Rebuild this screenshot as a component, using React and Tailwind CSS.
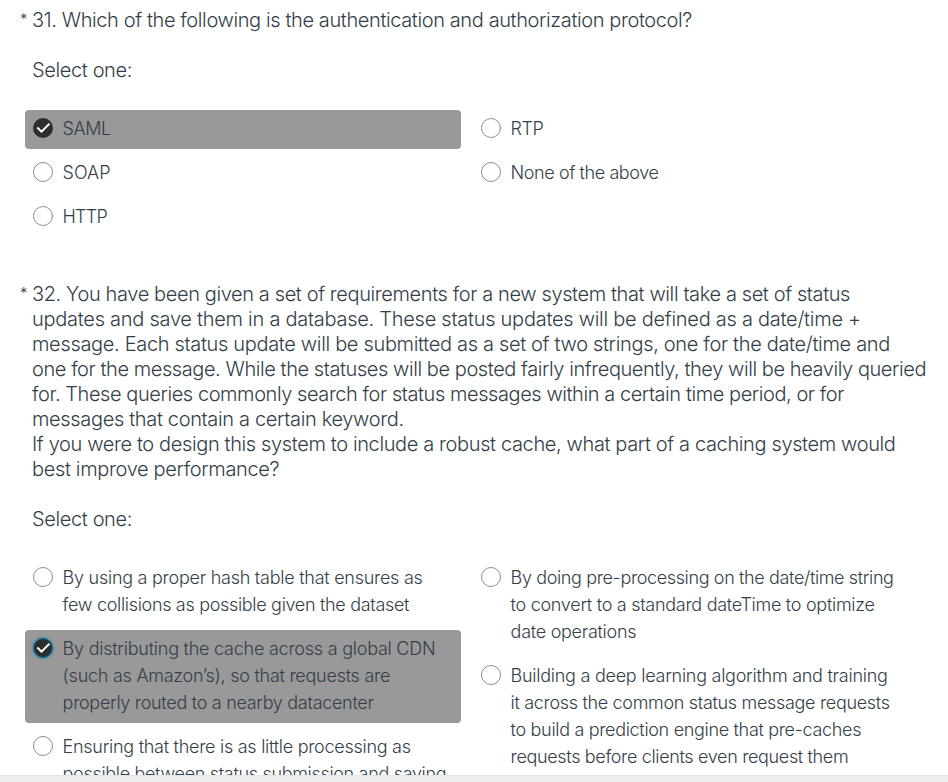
const QUESTION_31 = {
  title: [["31. Which of the following is the authentication and authorization protocol?", "tracking-[-0.388px]"]],
  left: [
    { selected: true, lines: [["SAML", "tracking-[-0.4px]"]] },
    { lines: [["SOAP", "tracking-[0px]"]] },
    { lines: [["HTTP", "tracking-[-0.8px]"]] },
  ],
  right: [
    { lines: [["RTP", "tracking-[-0.5px]"]] },
    { lines: [["None of the above", "tracking-[-0.42px]"]] },
  ],
};

const QUESTION_32 = {
  title: [
    ["32. You have been given a set of requirements for a new system that will take a set of status", "tracking-[-0.387px]"],
    ["updates and save them in a database. These status updates will be defined as a date/time +", "tracking-[-0.265px]"],
    ["message. Each status update will be submitted as a set of two strings, one for the date/time and", "tracking-[-0.327px]"],
    ["one for the message. While the statuses will be posted fairly infrequently, they will be heavily queried", "tracking-[-0.426px]"],
    ["for. These queries commonly search for status messages within a certain time period, or for", "tracking-[-0.431px]"],
    ["messages that contain a certain keyword.", "tracking-[-0.34px]"],
    ["If you were to design this system to include a robust cache, what part of a caching system would", "tracking-[-0.37px]"],
    ["best improve performance?", "tracking-[-0.34px]"],
  ],
  left: [
    {
      lines: [
        ["By using a proper hash table that ensures as", "tracking-[-0.26px]"],
        ["few collisions as possible given the dataset", "tracking-[-0.318px]"],
      ],
    },
    {
      selected: true,
      focused: true,
      lines: [
        ["By distributing the cache across a global CDN", "tracking-[-0.24px]"],
        ["(such as Amazon’s), so that requests are", "tracking-[-0.26px]"],
        ["properly routed to a nearby datacenter", "tracking-[-0.3px]"],
      ],
    },
    {
      lines: [
        ["Ensuring that there is as little processing as", "tracking-[-0.275px]"],
        ["possible between status submission and saving", "tracking-[-0.325px]"],
      ],
    },
  ],
  right: [
    {
      lines: [
        ["By doing pre-processing on the date/time string", "tracking-[-0.365px]"],
        ["to convert to a standard dateTime to optimize", "tracking-[-0.287px]"],
        ["date operations", "tracking-[-0.28px]"],
      ],
    },
    {
      lines: [
        ["Building a deep learning algorithm and training", "tracking-[-0.259px]"],
        ["it across the common status message requests", "tracking-[-0.322px]"],
        ["to build a prediction engine that pre-caches", "tracking-[-0.32px]"],
        ["requests before clients even request them", "tracking-[-0.345px]"],
      ],
    },
  ],
};

function Lines({ lines }) {
  return lines.map(([text, tracking]) => (
    <span key={text} className={`block whitespace-nowrap ${tracking}`}>
      {text}
    </span>
  ));
}

function Radio({ selected, focused }) {
  if (!selected) {
    return <span className="mt-2 size-5 shrink-0 rounded-full border border-[#8c8c8c] bg-white" />;
  }
  return (
    <span
      className={`mt-2 flex size-5 shrink-0 items-center justify-center rounded-full bg-[#2d2d2d] ${
        focused ? "border border-[#0878a3] shadow-[0_0_3px_#007faa]" : ""
      }`}
    >
      <svg viewBox="0 0 20 20" className="size-5 shrink-0" fill="none" stroke="#fff" strokeWidth="2">
        <path d="M4.3 9.5 L8.5 13.6 L16.4 5.7" />
      </svg>
    </span>
  );
}

function Option({ option }) {
  return (
    <label className={`flex gap-[9.6px] rounded pl-2 ${option.selected ? "bg-[#999999]" : ""}`}>
      <Radio selected={option.selected} focused={option.focused} />
      <span className="pt-[5px] pb-[7px] text-[18px] leading-[27px]">
        <Lines lines={option.lines} />
      </span>
    </label>
  );
}

function Question({ question }) {
  return (
    <section>
      <div className="flex pl-5 text-[20px] leading-[25px]">
        <span className="w-3 shrink-0 text-[15px] leading-[22px]">*</span>
        <div>
          <h2>
            <Lines lines={question.title} />
          </h2>
          <p className="mt-[25px] tracking-[-0.375px]">Select one:</p>
        </div>
      </div>
      <div className="mt-[27px] flex gap-3 pl-[25px]">
        <div className="flex w-[436px] flex-col gap-[5px]">
          {question.left.map((o) => (
            <Option key={o.lines[0][0]} option={o} />
          ))}
        </div>
        <div className="flex w-[436px] flex-col gap-[5px]">
          {question.right.map((o) => (
            <Option key={o.lines[0][0]} option={o} />
          ))}
        </div>
      </div>
    </section>
  );
}

export default function App() {
  return (
    <div className="flex h-[782px] w-[948px] flex-col bg-white font-['Inter','Liberation_Sans',sans-serif] font-light text-[#333e48]">
      <main className="flex h-[775px] shrink-0 flex-col gap-[45px] overflow-hidden pt-2">
        <Question question={QUESTION_31} />
        <Question question={QUESTION_32} />
      </main>
      <footer className="h-[7px] border-t border-[#e3e5e7] bg-[#eeeff1]" />
    </div>
  );
}
